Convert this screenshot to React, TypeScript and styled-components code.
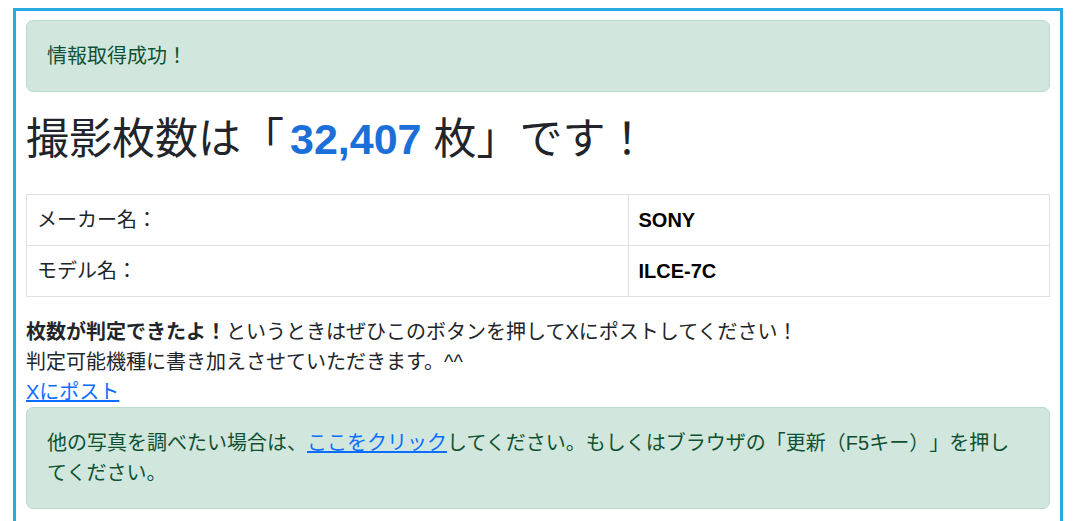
import React from "react";
import styled, { createGlobalStyle } from "styled-components";

const GlobalStyle = createGlobalStyle`
  body {
    margin: 8px;
    background: #ffffff;
    color: #212529;
    font-family: "Liberation Sans", "Noto Sans CJK JP", sans-serif;
    font-size: 20px;
    line-height: 1.5;
    text-spacing-trim: space-all;
  }
`;

const Frame = styled.div`
  margin: 0 5px;
  padding: 9px 10px 10px;
  border: 3px solid #29a9df;
  border-bottom: none;
  min-height: 520px;
`;

const Alert = styled.div<{ $gap?: number }>`
  padding: 20px 26px 20px 20px;
  margin-bottom: ${(p) => p.$gap ?? 0}px;
  border: 1px solid #badbcc;
  border-radius: 7px;
  background-color: #d1e7dd;
  color: #0f5132;
`;

const Heading = styled.h1`
  margin: 0 0 28px;
  font-size: 43px;
  font-weight: 400;
  line-height: 1.2;
  color: #212529;
`;

const Count = styled.strong`
  margin-left: 6px;
  color: #1a6fd8;
  font-weight: 700;
`;

const InfoTable = styled.table`
  width: 100%;
  border-collapse: collapse;
  margin-bottom: 20px;
`;

const Cell = styled.td<{ $value?: boolean }>`
  padding: 10px;
  border: 1px solid #dee2e6;
  width: ${(p) => (p.$value ? "auto" : "58.8%")};
  font-weight: ${(p) => (p.$value ? 700 : 400)};
  color: ${(p) => (p.$value ? "#000000" : "#212529")};
`;

const Text = styled.p`
  margin: 0;
`;

const Link = styled.a`
  color: #0d6efd;
  text-decoration: underline;
`;

const BlockLink = styled(Link)`
  display: inline-block;
`;

const rows = [
  { label: "メーカー名：", value: "SONY" },
  { label: "モデル名：", value: "ILCE-7C" },
];

const App: React.FC = () => {
  return (
    <>
      <GlobalStyle />
      <Frame>
        <Alert $gap={22}>情報取得成功！</Alert>
        <Heading>
          撮影枚数は「<Count>32,407</Count> 枚」です！
        </Heading>
        <InfoTable>
          <tbody>
            {rows.map((row) => (
              <tr key={row.label}>
                <Cell>{row.label}</Cell>
                <Cell $value>{row.value}</Cell>
              </tr>
            ))}
          </tbody>
        </InfoTable>
        <Text>
          <strong>枚数が判定できたよ！</strong>というときはぜひこのボタンを押してXにポストしてください！
        </Text>
        <Text>判定可能機種に書き加えさせていただきます。^^</Text>
        <BlockLink href="#">Xにポスト</BlockLink>
        <Alert>
          他の写真を調べたい場合は、<Link href="#">ここをクリック</Link>
          してください。もしくはブラウザの「更新（F5キー）」を押してください。
        </Alert>
      </Frame>
    </>
  );
};

export default App;
